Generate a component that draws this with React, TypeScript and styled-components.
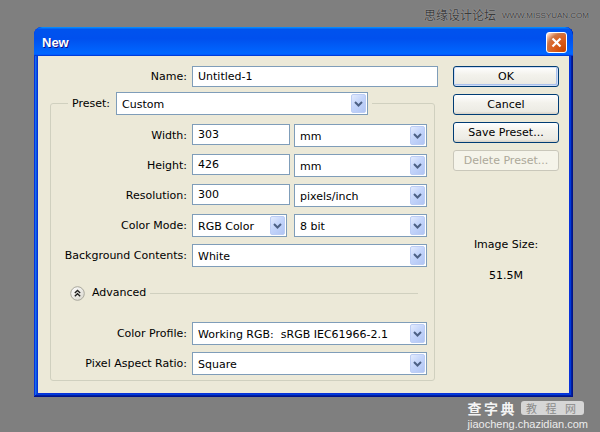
import styled, { createGlobalStyle } from "styled-components";

const GlobalStyle = createGlobalStyle`
  html, body {
    margin: 0;
    padding: 0;
    background: #7f7f7f;
  }
  body {
    font-family: "DejaVu Sans", Verdana, sans-serif;
    font-size: 11px;
    color: #000;
  }
`;

const Page = styled.div`
  width: 600px;
  height: 432px;
  display: flex;
  flex-direction: column;
  overflow: hidden;
`;

const TopStrip = styled.div`
  height: 27px;
  box-sizing: border-box;
  display: flex;
  justify-content: flex-end;
  align-items: flex-start;
  gap: 6px;
  padding: 7px 11px 0 0;
`;

const SiteName = styled.span`
  font-family: "Noto Sans CJK SC", sans-serif;
  font-size: 12px;
  line-height: 15px;
  color: #3a3a3a;
  text-shadow: 0 0 1px #c8c8c8;
`;

const SiteUrl = styled.span`
  font-family: "Liberation Sans", Arial, sans-serif;
  font-size: 8px;
  line-height: 15px;
  margin-top: 1px;
  color: #3a3a3a;
  text-shadow: 0 0 1px #c8c8c8;
`;

const Window = styled.div`
  margin-left: 34px;
  width: 539px;
  height: 370px;
  flex: none;
  display: flex;
  flex-direction: column;
  background: #0831d9;
  border-radius: 8px 8px 0 0;
  box-shadow: inset -1px -1px #00138c, inset 1px 1px #0831d9,
    inset -2px -2px #001ea0, inset 2px 2px #166aee, inset -3px -3px #003bda,
    inset 3px 3px #0855dd;
  overflow: hidden;
`;

const TitleBar = styled.div`
  height: 29px;
  flex: none;
  box-sizing: border-box;
  display: flex;
  align-items: center;
  justify-content: space-between;
  padding: 0 6px 0 8px;
  border-radius: 8px 8px 0 0;
  background: linear-gradient(
    180deg,
    #0997ff,
    #0053ee 8%,
    #0050ee 40%,
    #0066ff 88%,
    #0066ff 93%,
    #005bff 95%,
    #003dd7 96%,
    #003dd7
  );
`;

const Title = styled.span`
  font-family: "Liberation Sans", Arial, sans-serif;
  font-weight: bold;
  font-size: 13px;
  color: #fff;
  text-shadow: 1px 1px #0f1089;
  padding-top: 1px;
`;

const CloseButton = styled.div`
  width: 21px;
  height: 21px;
  box-sizing: border-box;
  border: 1px solid #fff;
  border-radius: 3px;
  display: flex;
  align-items: center;
  justify-content: center;
  margin-top: 1px;
  background: radial-gradient(
    circle at 90% 90%,
    #cc4600 0%,
    #dc6527 55%,
    #cd7546 70%,
    #ffccb2 90%,
    #fff 100%
  );
`;

const Body = styled.div`
  flex: 1;
  margin: 0 4px 4px;
  box-sizing: border-box;
  background: #ece9d8;
  display: flex;
  padding: 10px 0 0 12px;
`;

const FormColumn = styled.div`
  width: 388px;
  display: flex;
  flex-direction: column;
`;

const FieldRow = styled.div<{ $label: number; $control: number }>`
  display: grid;
  grid-template-columns: ${(p) => p.$label}px ${(p) => p.$control}px;
  column-gap: 5px;
  align-items: start;
`;

const Label = styled.label<{ $line?: number }>`
  text-align: right;
  white-space: nowrap;
  line-height: ${(p) => p.$line ?? 23}px;
`;

const TextBox = styled.input`
  box-sizing: border-box;
  width: 100%;
  height: 21px;
  margin: 0;
  padding: 0 5px;
  border: 1px solid #7f9db9;
  background: #fff;
  font: 11px "DejaVu Sans", Verdana, sans-serif;
  color: #000;
  outline: none;
`;

const Controls = styled.div`
  display: grid;
  grid-template-columns: 98px 133px;
  column-gap: 4px;
  align-items: start;
`;

const ComboBox = styled.div<{ $w?: number; $span?: boolean }>`
  box-sizing: border-box;
  height: 23px;
  width: ${(p) => (p.$w ? `${p.$w}px` : "100%")};
  grid-column: ${(p) => (p.$span ? "1 / -1" : "auto")};
  border: 1px solid #7f9db9;
  background: #fff;
  display: flex;
  align-items: center;
  padding: 1px 1px 1px 5px;
`;

const ComboText = styled.span`
  flex: 1;
  white-space: pre;
  line-height: 19px;
  padding-top: 1px;
  overflow: hidden;
`;

const ComboArrow = styled.span`
  width: 15px;
  height: 19px;
  flex: none;
  box-sizing: border-box;
  border-radius: 2px;
  border: 1px solid #bccdf5;
  background: linear-gradient(135deg, #e3ebfd 0%, #c4d5fb 45%, #b1c5f3 100%);
  display: flex;
  align-items: center;
  justify-content: center;
`;

const GroupBox = styled.fieldset`
  margin: 5px 0 0 0;
  padding: 0 0 5px 0;
  width: 385px;
  min-width: 0;
  box-sizing: border-box;
  border: 1px solid #d0d0bf;
  border-radius: 3px;
`;

const GroupLegend = styled.legend`
  margin-left: 17px;
  padding: 0 4px;
`;

const LegendInner = styled.div`
  display: flex;
  align-items: center;
  gap: 6px;
`;

const FieldStack = styled.div`
  display: flex;
  flex-direction: column;
  gap: 7px;
  padding-top: 9px;
`;

const AdvancedRow = styled.div`
  height: 16px;
  margin: 18px 0 0;
  padding-left: 19px;
  display: flex;
  align-items: center;
  gap: 7px;
`;

const AdvancedText = styled.span`
  line-height: 16px;
`;

const AdvancedLine = styled.span`
  flex: 1;
  height: 1px;
  margin: 1px 16px 0 -3px;
  background: #d0d0bf;
`;

const LowerStack = styled(FieldStack)`
  padding-top: 21px;
`;

const SideColumn = styled.div`
  margin-left: 15px;
  width: 106px;
  display: flex;
  flex-direction: column;
  gap: 7px;
`;

const XPButton = styled.button<{ $default?: boolean }>`
  box-sizing: border-box;
  height: 21px;
  width: 106px;
  margin: 0;
  padding: 0;
  font: 11px "DejaVu Sans", Verdana, sans-serif;
  color: #000;
  border: 1px solid #003c74;
  border-radius: 3px;
  background: linear-gradient(180deg, #fff, #f3f2ec 40%, #ecebe4 86%, #d6d0c5);
  box-shadow: ${(p) =>
    p.$default ? "inset 0 0 0 1px #cedcf6, inset -1px -1px 0 1px #a9c0ec" : "none"};

  &:disabled {
    color: #aca899;
    border-color: #c9c7ba;
    background: #f5f4ea;
  }
`;

const SizeCaption = styled.div<{ $gap: number }>`
  margin-top: ${(p) => p.$gap}px;
  text-align: center;
  line-height: 13px;
`;

const BottomStrip = styled.div`
  flex: 1;
  display: flex;
  justify-content: flex-end;
  padding: 4px 12px 0 0;
`;

const MarkBlock = styled.div`
  display: flex;
  flex-direction: column;
  align-items: flex-start;
`;

const MarkTop = styled.div`
  display: flex;
  align-items: center;
  gap: 4px;
  height: 14px;
`;

const MarkBrand = styled.span`
  font-family: "Noto Sans CJK SC", sans-serif;
  font-weight: bold;
  font-size: 14px;
  line-height: 14px;
  letter-spacing: 2.5px;
  color: #f4f4f4;
`;

const MarkTag = styled.span`
  width: 63px;
  height: 14px;
  border-radius: 3px;
  background: #d6d6d6;
  display: flex;
  align-items: center;
  justify-content: center;
  font-family: "Noto Sans CJK SC", sans-serif;
  font-size: 11px;
  line-height: 14px;
  letter-spacing: 3px;
  color: #8a8a8a;
  white-space: pre;
`;

const MarkUrl = styled.span`
  margin-top: 4px;
  font-family: "Liberation Sans", Arial, sans-serif;
  font-size: 11px;
  line-height: 11px;
  color: #ececec;
`;

function Chevron() {
  return (
    <svg width="9" height="6" viewBox="0 0 9 6">
      <polyline
        points="1,1 4.5,4.5 8,1"
        fill="none"
        stroke="#4d6185"
        strokeWidth="2"
      />
    </svg>
  );
}

function Combo({ value, w, span }: { value: string; w?: number; span?: boolean }) {
  return (
    <ComboBox $w={w} $span={span}>
      <ComboText>{value}</ComboText>
      <ComboArrow>
        <Chevron />
      </ComboArrow>
    </ComboBox>
  );
}

function CollapseIcon() {
  return (
    <svg width="15" height="15" viewBox="0 0 15 15">
      <defs>
        <linearGradient id="adv" x1="0" y1="0" x2="1" y2="1">
          <stop offset="0" stopColor="#ffffff" />
          <stop offset="1" stopColor="#d8d6cc" />
        </linearGradient>
      </defs>
      <circle cx="7.5" cy="7.5" r="6.8" fill="url(#adv)" stroke="#a8a79c" strokeWidth="1" />
      <polyline points="4.8,7 7.5,4.5 10.2,7" fill="none" stroke="#1e1e1e" strokeWidth="1.3" />
      <polyline points="4.8,10.2 7.5,7.7 10.2,10.2" fill="none" stroke="#1e1e1e" strokeWidth="1.3" />
    </svg>
  );
}

export default function App() {
  return (
    <Page>
      <GlobalStyle />
      <TopStrip>
        <SiteName>思缘设计论坛</SiteName>
        <SiteUrl>WWW.MISSYUAN.COM</SiteUrl>
      </TopStrip>

      <Window>
        <TitleBar>
          <Title>New</Title>
          <CloseButton>
            <svg width="11" height="11" viewBox="0 0 11 11">
              <path d="M1.5 1.5 L9.5 9.5 M9.5 1.5 L1.5 9.5" stroke="#fff" strokeWidth="2.2" />
            </svg>
          </CloseButton>
        </TitleBar>

        <Body>
          <FormColumn>
            <FieldRow $label={137} $control={246}>
              <Label $line={21}>Name:</Label>
              <TextBox readOnly defaultValue="Untitled-1" />
            </FieldRow>

            <GroupBox>
              <GroupLegend>
                <LegendInner>
                  <span>Preset:</span>
                  <Combo value="Custom" w={252} />
                </LegendInner>
              </GroupLegend>

              <FieldStack>
                <FieldRow $label={136} $control={235}>
                  <Label>Width:</Label>
                  <Controls>
                    <TextBox readOnly defaultValue="303" />
                    <Combo value="mm" />
                  </Controls>
                </FieldRow>
                <FieldRow $label={136} $control={235}>
                  <Label>Height:</Label>
                  <Controls>
                    <TextBox readOnly defaultValue="426" />
                    <Combo value="mm" />
                  </Controls>
                </FieldRow>
                <FieldRow $label={136} $control={235}>
                  <Label>Resolution:</Label>
                  <Controls>
                    <TextBox readOnly defaultValue="300" />
                    <Combo value="pixels/inch" />
                  </Controls>
                </FieldRow>
                <FieldRow $label={136} $control={235}>
                  <Label>Color Mode:</Label>
                  <Controls>
                    <Combo value="RGB Color" w={95} />
                    <Combo value="8 bit" />
                  </Controls>
                </FieldRow>
                <FieldRow $label={136} $control={235}>
                  <Label>Background Contents:</Label>
                  <Combo value="White" />
                </FieldRow>
              </FieldStack>

              <AdvancedRow>
                <CollapseIcon />
                <AdvancedText>Advanced</AdvancedText>
                <AdvancedLine />
              </AdvancedRow>

              <LowerStack>
                <FieldRow $label={136} $control={235}>
                  <Label>Color Profile:</Label>
                  <Combo value="Working RGB:  sRGB IEC61966-2.1" />
                </FieldRow>
                <FieldRow $label={136} $control={235}>
                  <Label>Pixel Aspect Ratio:</Label>
                  <Combo value="Square" />
                </FieldRow>
              </LowerStack>
            </GroupBox>
          </FormColumn>

          <SideColumn>
            <XPButton $default>OK</XPButton>
            <XPButton>Cancel</XPButton>
            <XPButton>Save Preset...</XPButton>
            <XPButton disabled>Delete Preset...</XPButton>
            <SizeCaption $gap={60}>Image Size:</SizeCaption>
            <SizeCaption $gap={11}>51.5M</SizeCaption>
          </SideColumn>
        </Body>
      </Window>

      <BottomStrip>
        <MarkBlock>
          <MarkTop>
            <MarkBrand>查字典</MarkBrand>
            <MarkTag>教 程 网</MarkTag>
          </MarkTop>
          <MarkUrl>jiaocheng.chazidian.com</MarkUrl>
        </MarkBlock>
      </BottomStrip>
    </Page>
  );
}
